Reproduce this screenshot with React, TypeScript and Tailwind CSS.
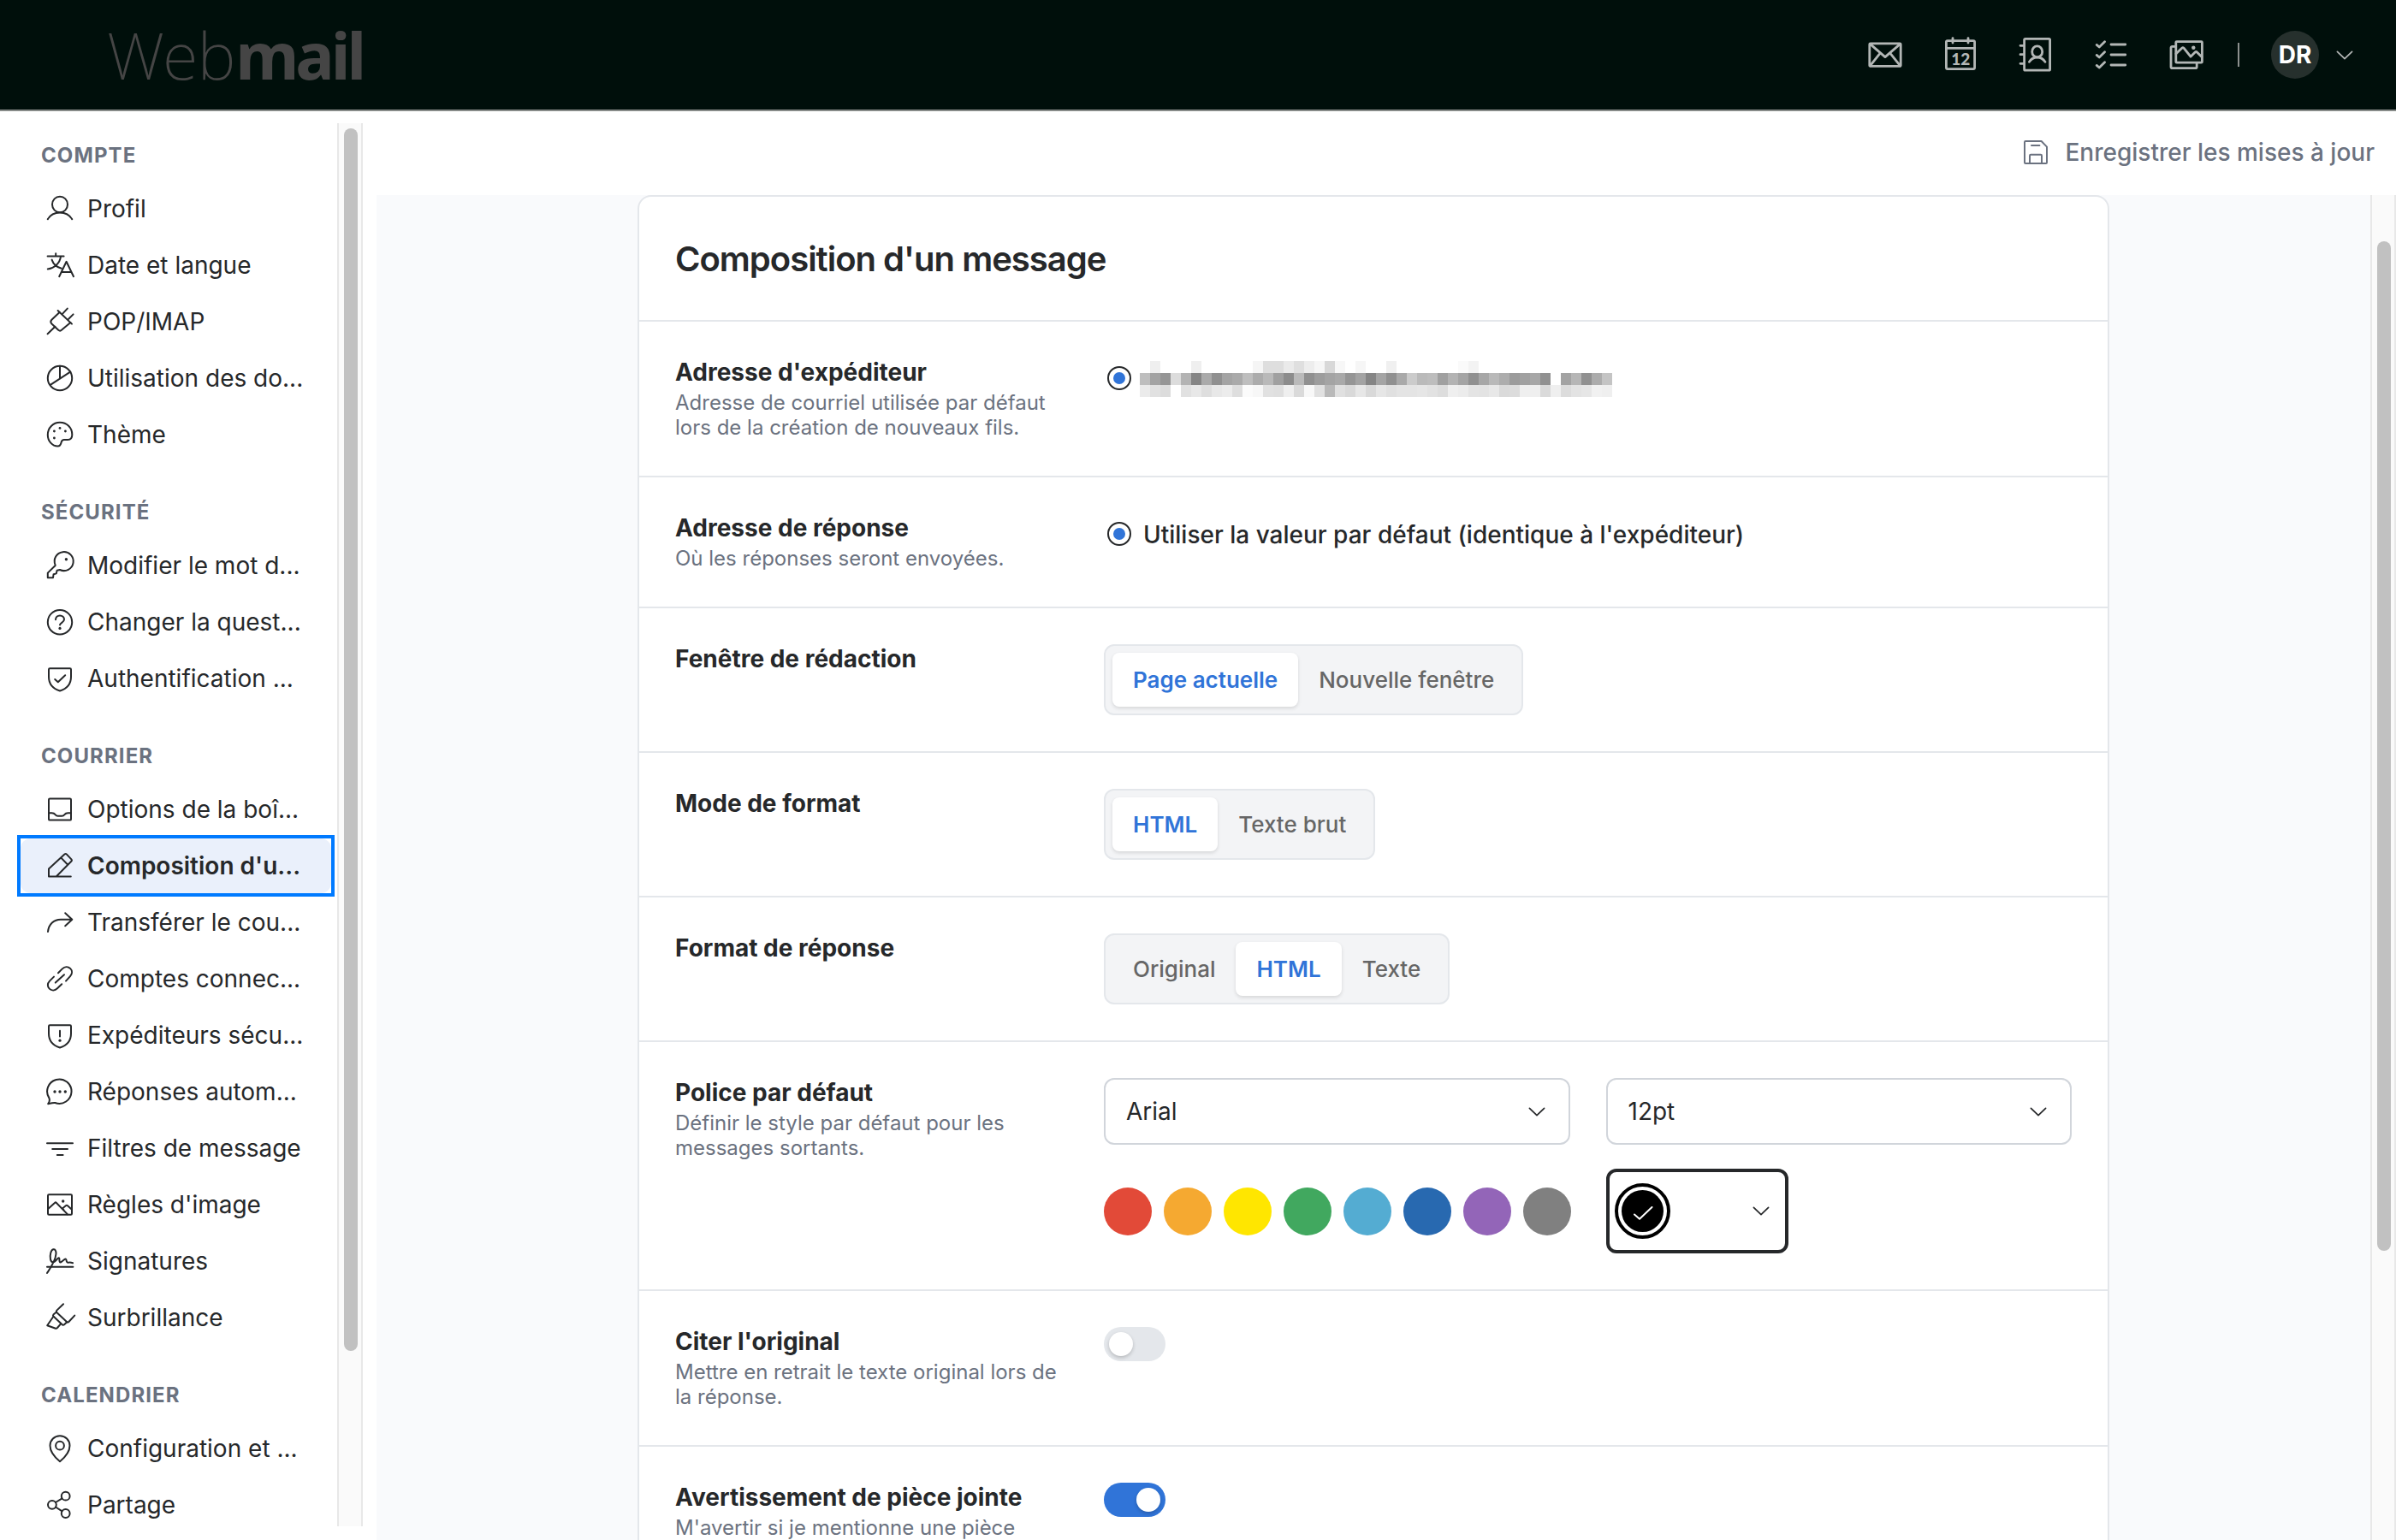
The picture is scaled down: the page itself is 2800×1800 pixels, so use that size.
import type { ReactNode } from 'react';

/* ---------- Icons ---------- */

interface IconProps {
  children: ReactNode;
}

// 32px outline icon used in the side navigation
function NavIcon({ children }: IconProps) {
  return (
    <svg
      className="w-8 h-8 shrink-0 overflow-visible"
      viewBox="0 0 32 32"
      fill="none"
      stroke="currentColor"
      strokeWidth={2}
      strokeLinecap="round"
      strokeLinejoin="round"
    >
      {children}
    </svg>
  );
}

// 40px outline icon used in the top bar
function AppIcon({ children }: IconProps) {
  return (
    <svg
      className="w-10 h-10 shrink-0 overflow-visible text-[#b3b7b6]"
      viewBox="0 0 40 40"
      fill="none"
      stroke="currentColor"
      strokeWidth={2.8}
      strokeLinecap="round"
      strokeLinejoin="round"
    >
      {children}
    </svg>
  );
}

function Dot({ x, y, r = 1.4 }: { x: number; y: number; r?: number }) {
  return <circle cx={x} cy={y} r={r} fill="currentColor" stroke="none" />;
}

function Chevron({ className = '' }: { className?: string }) {
  return (
    <svg
      className={`w-5 h-[11px] shrink-0 ${className}`}
      viewBox="0 0 20 11"
      fill="none"
      stroke="currentColor"
      strokeWidth={1.7}
      strokeLinecap="round"
      strokeLinejoin="round"
    >
      <path d="M1.4 1.3 10 9.7l8.6-8.4" />
    </svg>
  );
}

const SHIELD = 'M4.2 4.2h23.6c.7 0 1.2.5 1.2 1.2V14c0 8-5 14-13 16.5C8 28 3 22 3 14V5.4c0-.7.5-1.2 1.2-1.2z';

const icons: Record<string, ReactNode> = {
  profile: (
    <>
      <ellipse cx="16" cy="11" rx="9" ry="9.3" />
      <path d="M1.8 28.2C4.5 23.4 9.8 20.4 16 20.4s11.5 3 14.2 7.8" />
    </>
  ),
  language: (
    <>
      <path d="M1.6 5.6H20.6M11.2 2.3v3.3M17 5.8C16 13 10 19.6 1.8 20.4M6.6 9.6c1.6 4.8 5.6 8.6 11.2 10.2" />
      <path d="M15.2 29.2 23.6 11.8 32 29.2M17.8 24H29.4" />
    </>
  ),
  plug: (
    <>
      <path d="M1.6 30.2 10.4 21.8M13.6 3 30 18.6M19.4 6.4l5.4-5.8M26.2 12.8l5.4-5.4" />
      <path d="M15.6 5 6.4 13.8c-1.5 1.6-1.5 3-.2 4.4l8 7.6c1.4 1.2 2.8 1 4-.2l10.2-8.6" />
    </>
  ),
  pie: (
    <>
      <circle cx="16" cy="16" r="14.2" />
      <path d="M16 1.8V16M5.2 23.6 28.2 8.6" />
    </>
  ),
  palette: (
    <>
      <path d="M16 1.8c8 0 14.3 6 14.3 14.2 0 4-1.8 6-5 6h-4.4c-2 0-2.8 1-3.2 2.8-.6 3-1.6 4.8-4.2 4.8-6.4 0-11.7-6-11.7-13.4C1.8 8 8 1.8 16 1.8z" />
      <Dot x={16} y={8.4} />
      <Dot x={9.4} y={12} />
      <Dot x={22.4} y={12} />
      <Dot x={9.4} y={20} />
    </>
  ),
  key: (
    <>
      <path d="M10.6 15.4A11 11 0 1 1 16 21l-3.4.8-.8 3.6-3.2.8-.6 4H1.8v-5.6l8.8-8.6z" />
      <Dot x={23.4} y={8.8} r={1.7} />
    </>
  ),
  question: (
    <>
      <circle cx="16" cy="16.2" r="14.2" />
      <path d="M11 13.2c0-2.8 2.2-4.8 5-4.8s5 2 5 4.6c0 3.6-4.8 3.8-5 6.4" />
      <Dot x={16} y={23.4} r={1.6} />
    </>
  ),
  shieldCheck: (
    <>
      <path d={SHIELD} />
      <path d="m10.2 17 3.6 3.2 8.4-8" />
    </>
  ),
  inbox: (
    <>
      <rect x="3" y="3.6" width="26" height="25" rx="1.2" />
      <path d="M3 20.2h3.6c2.4 0 3 .6 4 2 .9 1.2 1.6 1.6 3 1.6h4.8c1.4 0 2.1-.4 3-1.6 1-1.4 1.6-2 4-2H29" />
    </>
  ),
  pencil: (
    <path d="M28.8 28.4H3v-9L21.4 2.6c.9-.8 1.8-.8 2.6 0l5.4 5.8c.7.8.7 1.6-.1 2.4L12 28.2M17.4 6.6l7.8 8.2" />
  ),
  forward: <path d="M2 27C3 18 9 12.7 17 12.7h13.2M22.2 5.2l8.1 7.5-8.1 7.5" />,
  link: (
    <>
      <path d="m14 9.2 4.8-4.8c3-3 6.8-2.8 9.3-.5 2.6 2.6 2.5 6.4-.1 9.3L23 18.6" />
      <path d="m9 13.6-5 5c-2.9 2.9-2.7 6.7-.3 9 2.6 2.5 6.5 2.4 9.3-.3l5.2-5" />
      <path d="M10.8 20.6 21 11.2" />
    </>
  ),
  shieldAlert: (
    <>
      <path d={SHIELD} />
      <path d="M16 10.8v6.6" />
      <Dot x={16} y={22.2} r={1.6} />
    </>
  ),
  chat: (
    <>
      <path d="M2.2 30.2c1.8-2.4 2.2-4.4 1.2-6.8A14.2 14.2 0 1 1 10.4 29c-2-.5-3.4.6-8.2 1.2z" />
      <Dot x={10} y={16} r={1.7} />
      <Dot x={16} y={16} r={1.7} />
      <Dot x={22.3} y={16} r={1.7} />
    </>
  ),
  filter: <path d="M1 10.3H31M7.2 17H25M12.8 24H19.6" />,
  image: (
    <>
      <rect x="2" y="4.3" width="28" height="23.4" rx="1.2" />
      <path d="m2.2 21 8-7.2c.5-.5 1-.5 1.5 0L25 27.4M19.2 20.2l4-3.2c.5-.4 1-.4 1.5 0l5.3 4.8M19.2 20.2l1.4 2.4" />
      <Dot x={19.7} y={12} r={1.7} />
    </>
  ),
  signature: (
    <>
      <path d="M1 22.7H31.4" />
      <path d="M1 30C5 24 10.8 16 11.5 7.5c.2-4-1.4-5.5-3.2-5.2C5.5 3 4 9 5 14c1 4.6 4.5 4.2 8-.6 1.4-1.8 2.5-1.4 2.4.4-.1 2.8.4 4.8 2.6 3l3.4-2.8c1.2-.8 1.9-.4 2.1.8.3 2.4 1.2 3.4 3 2.8 1.4-.5 2.4-.2 4.6.6" />
    </>
  ),
  highlighter: (
    <>
      <path d="m20 .2-7.4 7.2c-1.2 1.2-.9 2.2.2 3.2L24 21c.9.9 1.7.7 2.6-.2l6.6-7.2" />
      <path d="m12 9.600-3.6 3c-.6.6-.6 1.2 0 1.800l10.600 10c.6.5 1.200.6 1.800 0l3.400-3.200" />
      <path d="M8.4 14.8 1.2 25.2l9.8 3.6c.8.2 1.4 0 2-.8l4-4.6" />
    </>
  ),
  pin: (
    <>
      <path d="M16 31.2C10 26.3 4.5 20.3 4.5 12.7a11.5 11.5 0 0 1 23 0C27.5 20.3 22 26.3 16 31.2z" />
      <circle cx="16" cy="12.7" r="4.9" />
    </>
  ),
  share: (
    <>
      <circle cx="6.9" cy="15.8" r="4.9" />
      <circle cx="22.7" cy="5.7" r="4.9" />
      <circle cx="22.7" cy="26" r="4.9" />
      <path d="m11 13 7.6-4.7M11 18.5l7.6 4.8" />
    </>
  ),
};

/* ---------- Data ---------- */

interface NavGroup {
  title: string;
  items: { icon: string; label: string; active?: boolean }[];
}

const navGroups: NavGroup[] = [
  {
    title: 'COMPTE',
    items: [
      { icon: 'profile', label: 'Profil' },
      { icon: 'language', label: 'Date et langue' },
      { icon: 'plug', label: 'POP/IMAP' },
      { icon: 'pie', label: 'Utilisation des do...' },
      { icon: 'palette', label: 'Thème' },
    ],
  },
  {
    title: 'SÉCURITÉ',
    items: [
      { icon: 'key', label: 'Modifier le mot d...' },
      { icon: 'question', label: 'Changer la quest...' },
      { icon: 'shieldCheck', label: 'Authentification ...' },
    ],
  },
  {
    title: 'COURRIER',
    items: [
      { icon: 'inbox', label: 'Options de la boî...' },
      { icon: 'pencil', label: "Composition d'u...", active: true },
      { icon: 'forward', label: 'Transférer le cou...' },
      { icon: 'link', label: 'Comptes connec...' },
      { icon: 'shieldAlert', label: 'Expéditeurs sécu...' },
      { icon: 'chat', label: 'Réponses autom...' },
      { icon: 'filter', label: 'Filtres de message' },
      { icon: 'image', label: "Règles d'image" },
      { icon: 'signature', label: 'Signatures' },
      { icon: 'highlighter', label: 'Surbrillance' },
    ],
  },
  {
    title: 'CALENDRIER',
    items: [
      { icon: 'pin', label: 'Configuration et ...' },
      { icon: 'share', label: 'Partage' },
    ],
  },
];

const swatches = ['#e24a38', '#f5a931', '#ffe600', '#41a85f', '#54acd2', '#2869b0', '#9365b8', '#808080'];

// Grey levels of the masked e-mail address, one hex byte per block
const maskedRows = [
  'ff ef ff ff ff ef ff ff ff ff ff f5 de de ea df ed f6 d8 f7 ff f6 ff ff f0 ff ff ff ff ff ff fa f3 ff ff ff ff ff ff ff ff ff ff ff ff ff',
  'be a3 95 dc b3 85 aa 90 a4 aa be ac b9 a0 8c ba 90 9d a4 a9 95 a3 85 a4 90 a9 cb ba bd a0 b3 a4 90 a7 b9 ad 9b a1 a7 91 ff a3 b6 91 ac c4',
  'eb e1 dc ff e1 e8 de e8 ec de fb f7 e1 df ef da f8 e1 b9 e0 d9 e7 d9 e6 e0 e4 e4 e6 e2 dd ef ec e4 e3 e8 da dc ef ef da ef dc e3 e6 f1 ef',
].map((row) => row.split(' '));

/* ---------- Top bar ---------- */

function TopBar() {
  return (
    <header className="flex h-[130px] shrink-0 items-center justify-between border-b-2 border-[#878b89] bg-[#000f0b] pl-[125px] pr-[49px]">
      <div className="flex items-baseline text-[76px] leading-none text-[#454545]">
        <span className="font-['Noto_Sans'] font-extralight tracking-[-0.5px]">Web</span>
        <span className="font-['Noto_Sans'] font-bold tracking-[-4px]">mail</span>
      </div>
      <div className="flex items-center">
        <div className="flex items-center gap-12">
          <AppIcon>
            <rect x="1.8" y="6.8" width="36.4" height="26.6" rx="1" />
            <path d="M2.4 7.4 20 22.6 37.6 7.4M2.4 32.8l11-13.6M37.6 32.8l-11-13.6" />
          </AppIcon>
          <AppIcon>
            <rect x="3.4" y="3.6" width="33.2" height="33" rx="1.5" />
            <path d="M3.4 12.3H36.6M11 .6V6M29 .6V6" />
            <text
              x="20.3"
              y="31.6"
              textAnchor="middle"
              fill="currentColor"
              stroke="none"
              className="font-['Lato'] text-[19px] font-black"
            >
              12
            </text>
          </AppIcon>
          <AppIcon>
            <rect x="6.6" y="1.4" width="30" height="36.8" rx="1.2" />
            <path d="M2 9.3h4.6M2 19.7h4.6M2 30.3h4.6" />
            <ellipse cx="21.7" cy="16.4" rx="6" ry="6.5" />
            <path d="M12.4 28.4c2-3.4 5.3-5.4 9.3-5.4s7.3 2 9.3 5.4" />
          </AppIcon>
          <AppIcon>
            <path d="m3.2 8.4 3 2.6 6.4-6.2M3.2 20.4l3 2.6 6.4-6.2M3.2 32.4l3 2.6 6.4-6.2" />
            <path d="M20 8H36.8M20 20H36.8M20 32H36.8" />
          </AppIcon>
          <AppIcon>
            <rect x="7.8" y="4.6" width="30.6" height="24.6" rx="1" />
            <path d="M7.2 10.4H3.4c-.8 0-1.4.6-1.4 1.4v22.4c0 .9.6 1.4 1.4 1.4h27.4c.9 0 1.4-.5 1.4-1.4v-4.6" />
            <path d="m8 18.8 6.8-6.6c.8-.7 1.5-.7 2.2 0l8 10 5.2-5.2c.8-.7 1.5-.7 2.2 0l5.6 5.6" />
            <Dot x={28.3} y={11.7} r={2.2} />
          </AppIcon>
        </div>
        <div className="ml-10 h-7 w-0.5 bg-[#8c908e]" />
        <div className="ml-[37px] flex h-14 w-14 items-center justify-center rounded-full bg-[#26302d] text-[28px] font-bold text-white">
          DR
        </div>
        <Chevron className="ml-[20px] mr-px text-[#b3b7b6]" />
      </div>
    </header>
  );
}

/* ---------- Sidebar ---------- */

function NavItem({ icon, label, active }: NavGroup['items'][number]) {
  // The focus ring keeps square corners around the rounded row
  return (
    <div className={active ? 'outline-4 outline-[#007aff]' : ''}>
      <div className={`flex h-16 items-center gap-4 rounded-xl pl-[30px] ${active ? 'bg-[#eaf0fb] font-semibold' : ''}`}>
        <NavIcon>{icons[icon]}</NavIcon>
        <span className="whitespace-nowrap">{label}</span>
      </div>
    </div>
  );
}

function Sidebar() {
  return (
    <aside className="mt-3.5 flex h-[1640px] w-[424px] shrink-0 overflow-hidden">
      <nav className="w-[394px] pl-6 pt-[23px] text-[28px]">
        {navGroups.map((group) => (
          <section key={group.title} className="mb-[44px] w-[363px]">
            <h2 className="mb-4 pl-6 text-[24px] leading-[29px] font-bold tracking-[1.1px] text-[#6b7280]">
              {group.title}
            </h2>
            <div className="flex flex-col gap-0.5">
              {group.items.map((item) => (
                <NavItem key={item.label} {...item} />
              ))}
            </div>
          </section>
        ))}
      </nav>
      <div className="w-[30px] border-x-2 border-[#e8e8e8] bg-[#fafafa] px-1.5 pt-1.5">
        <div className="h-[1429px] w-4 rounded-full bg-[#c1c1c1]" />
      </div>
    </aside>
  );
}

/* ---------- Form controls ---------- */

function Radio() {
  return (
    <span className="flex h-7 w-7 shrink-0 items-center justify-center rounded-full border-2 border-[#26282a]">
      <span className="h-3.5 w-3.5 rounded-full bg-[#3074d8]" />
    </span>
  );
}

function MaskedAddress() {
  return (
    <div>
      {maskedRows.map((row, y) => (
        <div key={y} className="flex">
          {row.map((level, x) => (
            <span
              key={x}
              className="h-3.5 w-3"
              style={{ backgroundColor: level === 'ff' ? 'transparent' : `#${level}${level}${level}` }}
            />
          ))}
        </div>
      ))}
    </div>
  );
}

function Segmented({ options, selected }: { options: string[]; selected: string }) {
  return (
    <div className="inline-flex h-[83px] items-center rounded-xl border-2 border-[#e4e7eb] bg-[#f3f4f6] px-2 text-[26px]">
      {options.map((option) => (
        <button
          key={option}
          className={
            option === selected
              ? 'h-[63px] rounded-lg bg-white px-6 font-semibold text-[#3074d8] shadow-[0_2px_4px_rgba(0,0,0,0.12)]'
              : 'h-[63px] rounded-lg px-6 font-medium text-[#666666]'
          }
        >
          {option}
        </button>
      ))}
    </div>
  );
}

function Select({ value }: { value: string }) {
  return (
    <div className="flex h-[78px] items-center justify-between rounded-xl border-2 border-[#d1d5db] pl-6 pr-[27px] text-[28px]">
      {value}
      <Chevron />
    </div>
  );
}

function Toggle({ on = false }: { on?: boolean }) {
  return (
    <div className={`flex h-10 w-[72px] items-center rounded-full px-1.5 ${on ? 'justify-end bg-[#3074d8]' : 'bg-[#e4e7eb]'}`}>
      <div className="h-7 w-7 rounded-full bg-white shadow-[0_2px_4px_rgba(0,0,0,0.2)]" />
    </div>
  );
}

interface RowProps {
  title: string;
  description?: string;
  children: ReactNode;
}

function Row({ title, description, children }: RowProps) {
  return (
    <div className="grid grid-cols-[459px_1fr] gap-[42px] border-t-2 border-[#e4e7eb] p-[42px]">
      <div>
        <h3 className="text-[28px] leading-[34px] font-bold">{title}</h3>
        {description && <p className="mt-1 text-[24px] leading-[29px] text-[#6b7280]">{description}</p>}
      </div>
      <div>{children}</div>
    </div>
  );
}

/* ---------- Settings card ---------- */

function ComposeSettings() {
  return (
    <div className="w-[1720px] shrink-0 self-start rounded-2xl border-2 border-[#e4e7eb] bg-white">
      <h1 className="flex h-36 items-center pt-0.5 pl-[42px] text-[40px] font-semibold tracking-[-1px]">
        Composition d'un message
      </h1>

      <Row title="Adresse d'expéditeur" description="Adresse de courriel utilisée par défaut lors de la création de nouveaux fils.">
        <div className="flex gap-2.5 pl-1 pt-1">
          <span className="pt-1.5">
            <Radio />
          </span>
          <MaskedAddress />
        </div>
      </Row>

      <Row title="Adresse de réponse" description="Où les réponses seront envoyées.">
        <div className="flex items-start gap-3.5 pl-1 pt-2 text-[28px] leading-[34px] font-medium">
          <span className="pt-0.5">
            <Radio />
          </span>
          Utiliser la valeur par défaut (identique à l'expéditeur)
        </div>
      </Row>

      <Row title="Fenêtre de rédaction">
        <div className="flex">
          <Segmented options={['Page actuelle', 'Nouvelle fenêtre']} selected="Page actuelle" />
        </div>
      </Row>

      <Row title="Mode de format">
        <div className="flex">
          <Segmented options={['HTML', 'Texte brut']} selected="HTML" />
        </div>
      </Row>

      <Row title="Format de réponse">
        <div className="flex">
          <Segmented options={['Original', 'HTML', 'Texte']} selected="HTML" />
        </div>
      </Row>

      <Row title="Police par défaut" description="Définir le style par défaut pour les messages sortants.">
        <div className="grid grid-cols-2 gap-x-[42px] gap-y-7">
          <Select value="Arial" />
          <Select value="12pt" />
          <div className="flex items-center gap-3.5">
            {swatches.map((color) => (
              <span key={color} className="h-14 w-14 shrink-0 rounded-full" style={{ backgroundColor: color }} />
            ))}
          </div>
          <div className="flex h-[99px] w-[213px] items-center justify-between rounded-xl border-4 border-[#26282a] pl-1.5 pr-[18px]">
            <span className="flex h-[65px] w-[65px] items-center justify-center rounded-full border-4 border-black">
              <span className="flex h-[49px] w-[49px] items-center justify-center rounded-full bg-black">
                <svg className="mt-1 ml-0.5 h-4 w-6" viewBox="0 0 24 16" fill="none" stroke="white" strokeWidth={2} strokeLinecap="round" strokeLinejoin="round">
                  <path d="m2 9.5 6 5.2L22.5 1" />
                </svg>
              </span>
            </span>
            <Chevron />
          </div>
        </div>
      </Row>

      <Row title="Citer l'original" description="Mettre en retrait le texte original lors de la réponse.">
        <Toggle />
      </Row>

      <Row title="Avertissement de pièce jointe" description="M'avertir si je mentionne une pièce">
        <Toggle on />
      </Row>
    </div>
  );
}

function App() {
  return (
    <div className="flex h-[1800px] w-[2800px] flex-col overflow-hidden bg-white font-['Inter',sans-serif] text-[#26282a]">
      <TopBar />
      <div className="flex min-h-0 flex-1">
        <Sidebar />
        <main className="ml-4 flex min-w-0 flex-1 flex-col">
          <div className="flex h-[98px] shrink-0 items-start justify-end gap-[20px] pt-[31px] pr-[25px] text-[28px] leading-[34px] font-medium text-[#6b7280]">
            <svg className="mt-[3px] h-7 w-7" viewBox="0 0 28 28" fill="none" stroke="currentColor" strokeWidth={2} strokeLinecap="round" strokeLinejoin="round">
              <path d="M2 1h18.6L27 7.6V26c0 .6-.4 1-1 1H2c-.6 0-1-.4-1-1V2c0-.6.4-1 1-1z" />
              <path d="M9 6h9.4M7 27v-9c0-.7.5-1.2 1.2-1.2h11.6c.7 0 1.2.5 1.2 1.2v9" />
            </svg>
            Enregistrer les mises à jour
          </div>
          <div className="flex min-h-0 flex-1 overflow-hidden">
            <div className="flex flex-1 justify-center bg-[#f9fafc]">
              <ComposeSettings />
            </div>
            <div className="w-[30px] border-x-2 border-[#e8e8e8] bg-[#fafafa] px-1.5 pt-[54px]">
              <div className="h-[1180px] w-4 rounded-full bg-[#c1c1c1]" />
            </div>
          </div>
        </main>
      </div>
    </div>
  );
}

export default App;
